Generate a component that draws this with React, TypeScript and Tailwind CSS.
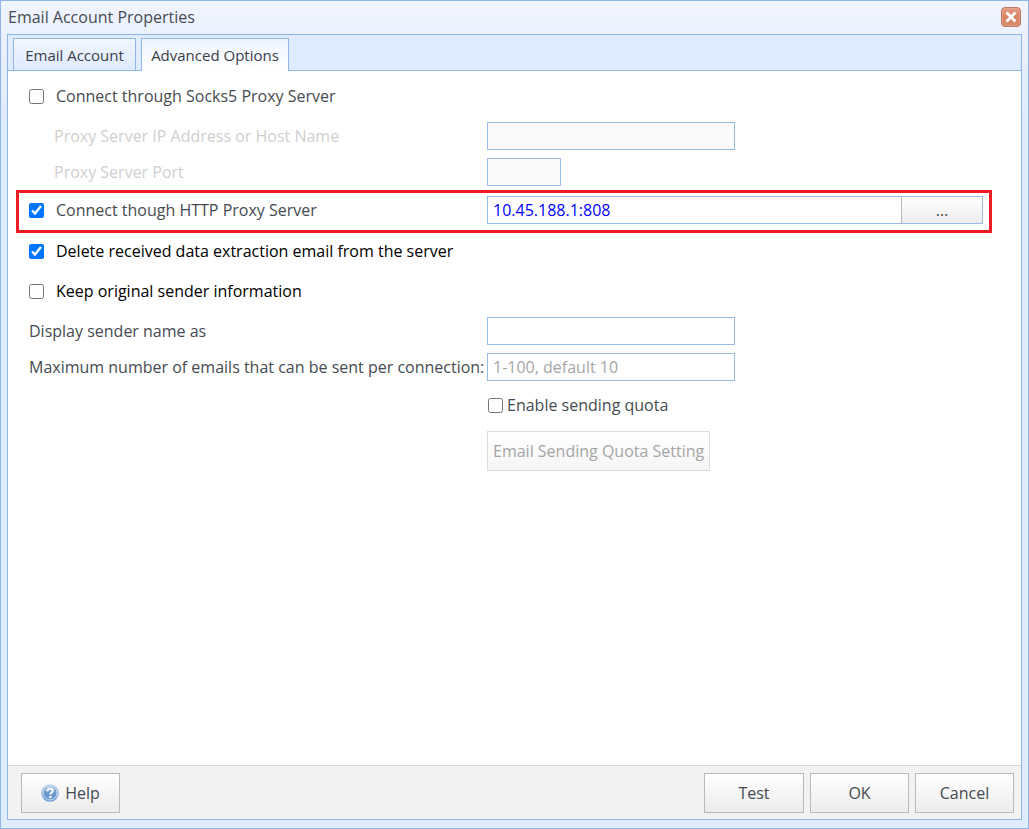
import React, { useState } from 'react';

interface CheckOptionProps {
  id: string;
  label: string;
  defaultChecked?: boolean;
  className?: string;
}

const fieldClass = 'h-7 border border-[#99bbe8] bg-white px-[5px] placeholder:text-[#a6a6a6] focus:outline-none disabled:bg-[#fafafa]';
const buttonClass = 'flex h-10 items-center justify-center border border-[#b9b9b9] bg-linear-to-b from-white to-[#ececec] text-[#464b52]';

function CheckOption({ id, label, defaultChecked = false, className = 'gap-3' }: CheckOptionProps) {
  return (
    <div className={`flex h-7 items-center ${className}`}>
      <input id={id} type="checkbox" defaultChecked={defaultChecked} className="h-[15px] w-[15px] shrink-0 accent-[#0075ff]" />
      <label htmlFor={id} className="whitespace-nowrap">{label}</label>
    </div>
  );
}

function CloseIcon() {
  return (
    <svg viewBox="0 0 20 20" className="h-5 w-5">
      <defs>
        <linearGradient id="close-fill" x1="0" y1="0" x2="0" y2="1">
          <stop offset="0" stopColor="#e4a08a" />
          <stop offset="0.45" stopColor="#dc8463" />
          <stop offset="1" stopColor="#d58d6c" />
        </linearGradient>
      </defs>
      <rect x="0.5" y="0.5" width="19" height="19" rx="3.5" fill="url(#close-fill)" stroke="#bd7a68" />
      <rect x="1.5" y="1.5" width="17" height="17" rx="2.5" fill="none" stroke="#e5a48e" strokeOpacity="0.6" />
      <path d="M6.5 6.5l7 7M13.5 6.5l-7 7" stroke="#fff" strokeWidth="2.7" strokeLinecap="square" />
    </svg>
  );
}

function HelpIcon() {
  return (
    <svg viewBox="0 0 18 18" className="h-[18px] w-[18px]">
      <defs>
        <linearGradient id="help-fill" x1="0" y1="0" x2="0" y2="1">
          <stop offset="0" stopColor="#a3c0e0" />
          <stop offset="0.5" stopColor="#6c98cb" />
          <stop offset="1" stopColor="#6d9bd0" />
        </linearGradient>
        <linearGradient id="help-rim" x1="0" y1="0" x2="0" y2="1">
          <stop offset="0" stopColor="#c3d8ee" />
          <stop offset="1" stopColor="#6a9ad1" />
        </linearGradient>
      </defs>
      <circle cx="9" cy="9" r="8.8" fill="url(#help-rim)" />
      <circle cx="9" cy="9" r="7" fill="url(#help-fill)" stroke="#c8dcf0" strokeWidth="1" />
      <path d="M6.3 7.2c0-1.6 1.1-2.6 2.8-2.6s2.7.9 2.7 2.3c0 1.7-2.4 1.8-2.4 3.7" fill="none" stroke="#f4f8fc" strokeWidth="2.1" />
      <circle cx="9.3" cy="13" r="1.3" fill="#f4f8fc" />
    </svg>
  );
}

export default function App() {
  const [proxy, setProxy] = useState('10.45.188.1:808');

  return (
    <div className="flex min-h-screen flex-col border border-[#8fb5ea] bg-[#dfebfe] bg-linear-to-b from-[#f0f4ff] to-[#dfebfe] to-[120px] px-1.5 pb-2 font-['Open_Sans',sans-serif] text-base leading-6 text-[#464b52]">
      <header className="flex h-[33px] items-center justify-between px-px pb-0.5">
        <h1>Email Account Properties</h1>
        <button type="button" aria-label="Close">
          <CloseIcon />
        </button>
      </header>

      <main className="flex flex-1 flex-col border border-[#8fb5ea] bg-white">
        {/* Tab strip, the active tab covers the line below it */}
        <div role="tablist" className="flex h-9 items-end gap-[5px] border-b border-[#8fb5ea] bg-[#dfebfe] pl-[5px] text-[15px] text-[#3c4047]">
          <button type="button" role="tab" aria-selected="false" className="h-8 w-[123px] border border-b-0 border-[#8fb5ea] bg-linear-to-b from-[#f1f6ff] to-[#deeafe]">
            Email Account
          </button>
          <button type="button" role="tab" aria-selected="true" className="-mb-px h-[33px] w-[148px] border border-b-0 border-[#8fb5ea] bg-linear-to-b from-[#edf4ff] to-white">
            Advanced Options
          </button>
        </div>

        <form className="flex flex-1 flex-col pt-[11px] pb-4" onSubmit={(e) => e.preventDefault()}>
          <div className="pl-[21px]">
            <CheckOption id="socks5" label="Connect through Socks5 Proxy Server" />
            <div className="mt-3 flex items-center text-[#cfcfcf]">
              <label htmlFor="proxy-host" className="w-[458px] shrink-0 pl-[25px]">Proxy Server IP Address or Host Name</label>
              <input id="proxy-host" type="text" disabled className={`${fieldClass} w-[248px]`} />
            </div>
            <div className="mt-2 flex items-center text-[#cfcfcf]">
              <label htmlFor="proxy-port" className="w-[458px] shrink-0 pl-[25px]">Proxy Server Port</label>
              <input id="proxy-port" type="text" disabled className={`${fieldClass} w-[74px]`} />
            </div>
          </div>

          {/* Highlighted HTTP proxy row */}
          <div className="mt-1 mr-[29px] ml-2 flex items-center border-3 border-[#ee1c25] pt-[3px] pr-1.5 pb-1.5 pl-2.5">
            <div className="w-[458px] shrink-0">
              <CheckOption id="http-proxy" label="Connect though HTTP Proxy Server" defaultChecked />
            </div>
            <div className="flex min-w-0 flex-1">
              <input
                type="text"
                aria-label="HTTP proxy address"
                value={proxy}
                onChange={(e) => setProxy(e.target.value)}
                className={`${fieldClass} min-w-0 flex-1 border-r-0 text-[#0000ff]`}
              />
              <button type="button" className="h-7 w-[82px] border border-[#99bbe8] border-l-[#b9b9b9] bg-linear-to-b from-white to-[#ececec]">
                ...
              </button>
            </div>
          </div>

          <div className="pl-[21px]">
            <div className="mt-1 text-black">
              <CheckOption id="delete-received" label="Delete received data extraction email from the server" defaultChecked />
            </div>
            <div className="mt-3 text-black">
              <CheckOption id="keep-sender" label="Keep original sender information" />
            </div>
            <div className="mt-3 flex items-center">
              <label htmlFor="sender-name" className="w-[458px] shrink-0">Display sender name as</label>
              <input id="sender-name" type="text" className={`${fieldClass} w-[248px]`} />
            </div>
            <div className="mt-2 flex items-center">
              <label htmlFor="max-emails" className="w-[458px] shrink-0 whitespace-nowrap">
                Maximum number of emails that can be sent per connection:
              </label>
              <input id="max-emails" type="text" placeholder="1-100, default 10" className={`${fieldClass} w-[248px]`} />
            </div>
            <div className="mt-2.5 ml-[458px]">
              <CheckOption id="enable-quota" label="Enable sending quota" className="gap-1 pl-px" />
              <button type="button" disabled className="mt-3 h-10 border border-[#dcdcdc] bg-linear-to-b from-white to-[#f5f5f5] px-[5px] whitespace-nowrap text-[#a5a5a5]">
                Email Sending Quota Setting
              </button>
            </div>
          </div>
        </form>

        <footer className="flex items-center justify-between border-t border-[#d8d8d8] bg-[#f2f2f2] pt-[7px] pr-[7px] pb-1.5 pl-[13px]">
          <button type="button" className={`${buttonClass} w-[99px] gap-1.5`}>
            <HelpIcon />
            Help
          </button>
          <div className="flex gap-1.5">
            <button type="button" className={`${buttonClass} w-[100px]`}>Test</button>
            <button type="button" className={`${buttonClass} w-[99px]`}>OK</button>
            <button type="button" className={`${buttonClass} w-[99px]`}>Cancel</button>
          </div>
        </footer>
      </main>
    </div>
  );
}
